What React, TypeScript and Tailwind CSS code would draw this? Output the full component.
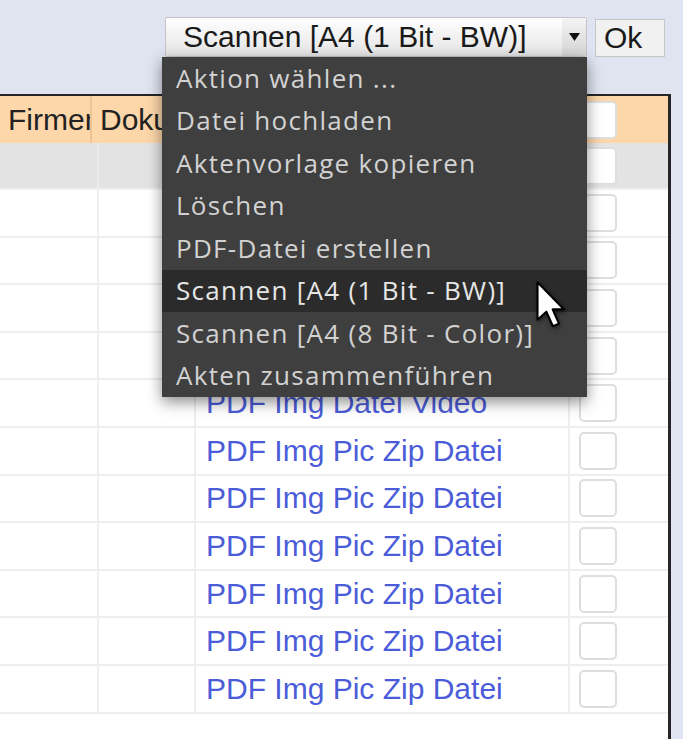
import React from 'react';

const MENU_ITEMS = [
  'Aktion wählen ...',
  'Datei hochladen',
  'Aktenvorlage kopieren',
  'Löschen',
  'PDF-Datei erstellen',
  'Scannen [A4 (1 Bit - BW)]',
  'Scannen [A4 (8 Bit - Color)]',
  'Akten zusammenführen',
];

const ACTIVE = 5;

// rows below the grey one; the first four sit under the open menu, so no text there
const ROWS = [
  '',
  '',
  '',
  '',
  'PDF Img Datei Video',
  'PDF Img Pic Zip Datei',
  'PDF Img Pic Zip Datei',
  'PDF Img Pic Zip Datei',
  'PDF Img Pic Zip Datei',
  'PDF Img Pic Zip Datei',
  'PDF Img Pic Zip Datei',
];

function Box() {
  return <div className="ml-[9px] w-[38px] h-[38px] rounded-[5px] border-2 border-[#dedede] bg-white" />;
}

function Cursor() {
  return (
    <svg
      className="absolute left-[535px] top-[280px] drop-shadow-[1px_2px_2px_rgba(0,0,0,0.5)]"
      width="33"
      height="49"
      viewBox="0 0 14 21"
    >
      <path
        d="M1 1 L1 17 L4.8 13.6 L7.6 19.8 L10.2 18.7 L7.5 12.6 L12.4 12.6 Z"
        fill="#ffffff"
        stroke="#000000"
        strokeWidth="0.9"
        strokeLinejoin="round"
      />
    </svg>
  );
}

export default function App() {
  return (
    <div className="relative w-[683px] h-[739px] overflow-hidden bg-[#e0e4f1] flex flex-col font-['Liberation_Sans',Arial,sans-serif]">
      {/* Action select */}
      <div className="h-[94px] shrink-0 flex items-start pt-[17px] pl-[165px]">
        <div className="w-[422px] h-[40px] flex items-center border border-[#c4c4c4] rounded-[2px] bg-gradient-to-b from-white to-[#e4e4e4]">
          <span className="pl-[17px] text-[30px] leading-none text-[#1a1a1a] flex-1">Scannen [A4 (1 Bit - BW)]</span>
          <div className="w-[24px] h-full flex items-center justify-center bg-gradient-to-b from-[#f4f4f4] to-[#d4d4d4]">
            <svg width="11" height="8" viewBox="0 0 11 8">
              <path d="M0 0 L11 0 L5.5 8 Z" fill="#111111" />
            </svg>
          </div>
        </div>
        <div className="ml-[8px] mt-[2px] w-[70px] h-[38px] flex items-center border border-[#c6c6c6] bg-[#f1f1f1]">
          <span className="pl-[8px] text-[30px] leading-none text-[#1a1a1a]">Ok</span>
        </div>
      </div>

      {/* Table */}
      <div className="w-[671px] flex-1 bg-white border-t-2 border-r-[3px] border-[#262626] flex flex-col">
        <div className="h-[47px] flex items-center bg-[#fdd7aa] text-[30px] text-[#222222]">
          <div className="w-[92px] h-full flex items-center pl-[8px] overflow-hidden whitespace-nowrap border-r-2 border-[#eec393]">Firmen</div>
          <div className="w-[104px] h-full flex items-center pl-[8px] overflow-hidden whitespace-nowrap">Dokumente</div>
          <div className="w-[374px] h-full" />
          <div className="flex-1 h-full flex items-center">
            <Box />
          </div>
        </div>

        <div className="h-[47px] flex bg-[#e3e3e3] border-b-2 border-[#f0f0f0]">
          <div className="w-[99px] border-r-2 border-[#ececec]" />
          <div className="w-[97px] border-r-2 border-[#ececec]" />
          <div className="w-[374px] border-r-2 border-[#ececec]" />
          <div className="flex-1 flex items-center">
            <Box />
          </div>
        </div>

        {ROWS.map((label, i) => (
          <div key={i} className="h-[47.6px] flex border-b-2 border-[#eeeeee]">
            <div className="w-[99px] border-r-2 border-[#eeeeee]" />
            <div className="w-[97px] border-r-2 border-[#eeeeee]" />
            <div className="w-[374px] border-r-2 border-[#eeeeee] flex items-center pl-[10px]">
              {label && <span className="text-[30px] leading-none text-[#4b5cd8] whitespace-nowrap">{label}</span>}
            </div>
            <div className="flex-1 flex items-center">
              <Box />
            </div>
          </div>
        ))}
      </div>

      {/* Open dropdown list */}
      <div className="absolute left-[162px] top-[57px] w-[425px] bg-[#3f3f3f] shadow-[0_5px_14px_rgba(0,0,0,0.45)] font-['Open_Sans','Noto_Sans',sans-serif]">
        {MENU_ITEMS.map((item, i) => (
          <div
            key={item}
            className={
              i === ACTIVE
                ? 'h-[42.5px] flex items-center pl-[14px] text-[26px] tracking-[1.3px] text-[#e6e6e6] bg-[#2b2b2b] whitespace-nowrap'
                : 'h-[42.5px] flex items-center pl-[14px] text-[26px] tracking-[1.3px] text-[#d2d2d2] whitespace-nowrap'
            }
          >
            {item}
          </div>
        ))}
      </div>

      <Cursor />
    </div>
  );
}
